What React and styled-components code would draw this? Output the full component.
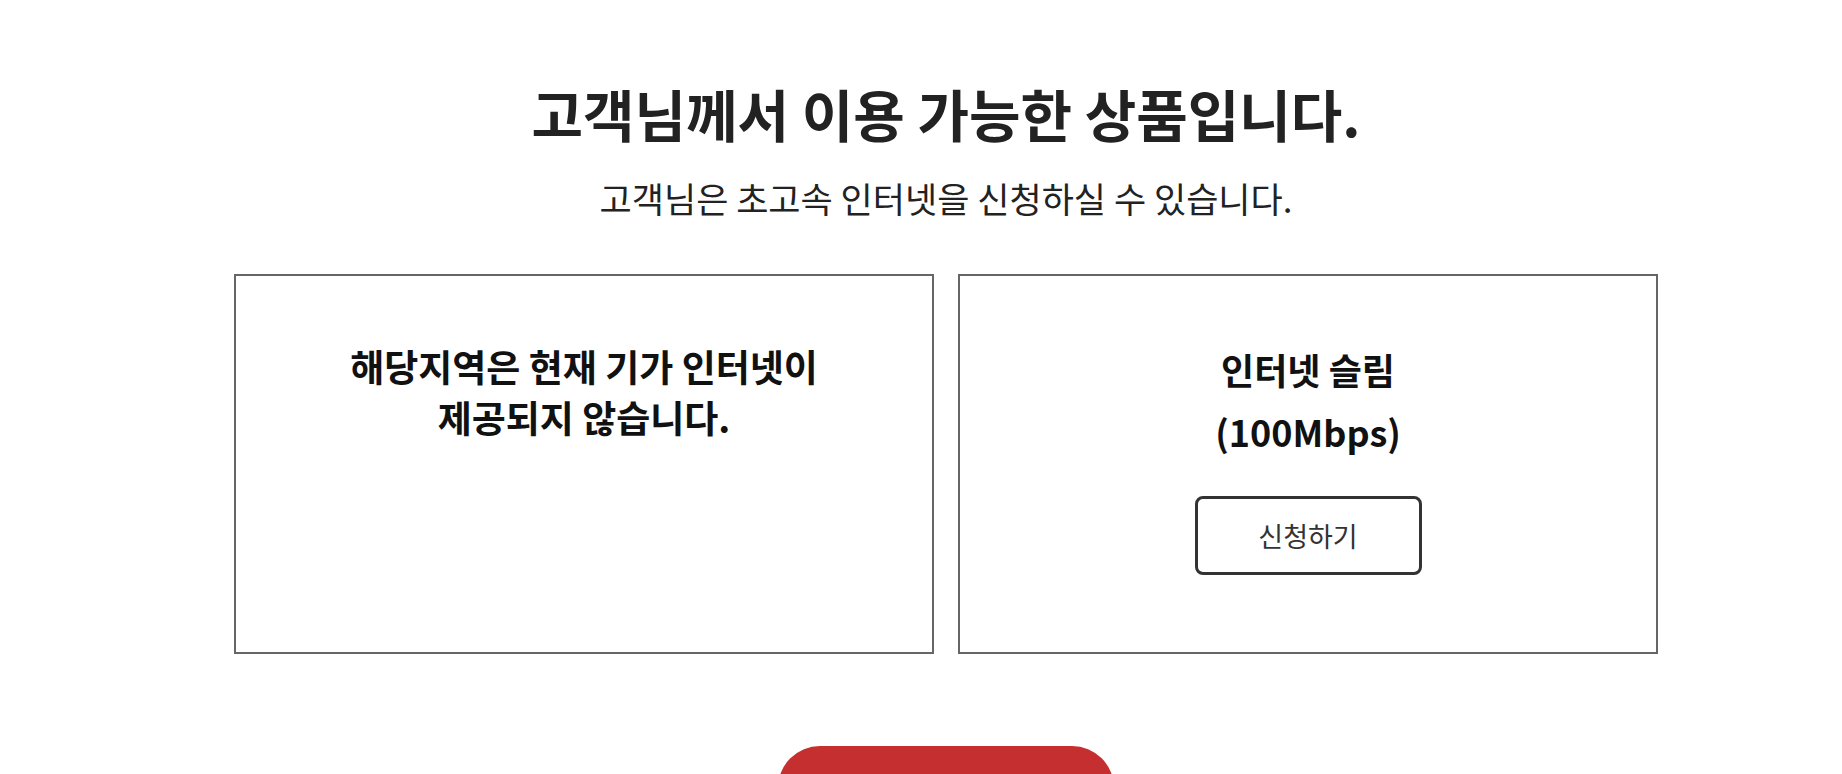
import React from 'react';
import styled, { createGlobalStyle } from 'styled-components';

const GlobalStyle = createGlobalStyle`
    body {
        margin: 0;
        background: #fff;
        font-family: "Noto Sans CJK KR", "Noto Sans", sans-serif;
        color: #222;
    }
`;

const Page = styled.div`
    display: flex;
    flex-direction: column;
    align-items: center;
    padding: 76px 0 0 50px;
    overflow: hidden;
    height: 774px;
    box-sizing: border-box;
`;

const Title = styled.h2`
    margin: 0;
    font-size: 56px;
    font-weight: 700;
    line-height: 74px;
    color: #222;
`;

const SubTitle = styled.p`
    margin: 24px 0 0;
    font-size: 35px;
    font-weight: 400;
    line-height: 48px;
    color: #222;
`;

const CardRow = styled.div`
    display: grid;
    grid-template-columns: 700px 700px;
    gap: 24px;
    margin-top: 52px;
`;

const Card = styled.div`
    box-sizing: border-box;
    height: 380px;
    border: 2px solid #666;
    display: flex;
    flex-direction: column;
    align-items: center;
    padding-top: ${props => props.$top}px;
    text-align: center;
`;

const Notice = styled.p`
    margin: 0;
    font-size: 37px;
    font-weight: 700;
    line-height: 51px;
    color: #111;
`;

const ProductName = styled.p`
    margin: 0;
    font-size: 36px;
    font-weight: 700;
    line-height: 62px;
    color: #111;
`;

const ApplyButton = styled.button`
    box-sizing: border-box;
    width: 227px;
    height: 79px;
    margin-top: 34px;
    border: 3px solid #333;
    border-radius: 8px;
    background: #fff;
    font-family: inherit;
    font-size: 27px;
    color: #333;
    cursor: pointer;
`;

const MainButton = styled.button`
    flex: none;
    width: 336px;
    height: 84px;
    margin-top: 92px;
    border: 0;
    border-radius: 42px;
    background: #c62f2f;
    color: #fff;
    font-family: inherit;
    font-size: 28px;
    font-weight: 700;
`;

export default function App() {
    return <>
        <GlobalStyle />
        <Page>
            <Title>고객님께서 이용 가능한 상품입니다.</Title>
            <SubTitle>고객님은 초고속 인터넷을 신청하실 수 있습니다.</SubTitle>
            <CardRow>
                <Card $top={65}>
                    <Notice>해당지역은 현재 기가 인터넷이<br />제공되지 않습니다.</Notice>
                </Card>
                <Card $top={62}>
                    <ProductName>인터넷 슬림<br />(100Mbps)</ProductName>
                    <ApplyButton>신청하기</ApplyButton>
                </Card>
            </CardRow>
            <MainButton>처음으로</MainButton>
        </Page>
    </>;
}
